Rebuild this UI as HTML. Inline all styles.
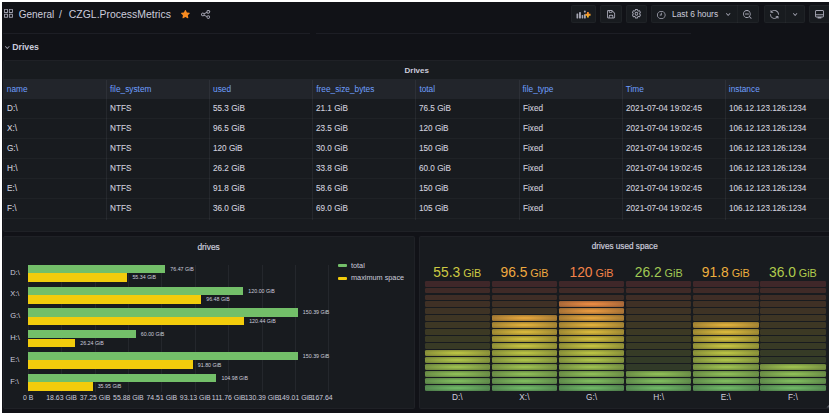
<!DOCTYPE html><html><head><meta charset="utf-8"><style>
*{box-sizing:border-box;margin:0;padding:0}
html,body{width:829px;height:413px;overflow:hidden;background:#fff}
body{font-family:"Liberation Sans",sans-serif;color:#ccccdc;position:relative}
.a{position:absolute}
.canvas{position:absolute;left:2px;top:2px;width:827px;height:411px;background:#111217;overflow:hidden}
.btn{position:absolute;top:5px;height:18px;background:#181b1f;border:1px solid rgba(204,204,220,0.07);border-radius:2px}
.panel{position:absolute;background:#181b1f;border:1px solid rgba(204,204,220,0.04);border-radius:2px;overflow:hidden}
.t{position:absolute;white-space:nowrap;line-height:1}
svg{position:absolute;overflow:visible}
</style></head><body><div class="canvas"></div>
<svg style="left:4.00px;top:9.20px" width="8.90" height="8.70" viewBox="2 2 20 20" preserveAspectRatio="none"><path d="M10,13H3a1,1,0,0,0-1,1v7a1,1,0,0,0,1,1h7a1,1,0,0,0,1-1V14A1,1,0,0,0,10,13ZM9,20H4V15H9ZM21,2H14a1,1,0,0,0-1,1v7a1,1,0,0,0,1,1h7a1,1,0,0,0,1-1V3A1,1,0,0,0,21,2ZM20,9H15V4h5Zm1,4H14a1,1,0,0,0-1,1v7a1,1,0,0,0,1,1h7a1,1,0,0,0,1-1V14A1,1,0,0,0,21,13Zm-1,7H15V15h5ZM10,2H3A1,1,0,0,0,2,3v7a1,1,0,0,0,1,1h7a1,1,0,0,0,1-1V3A1,1,0,0,0,10,2ZM9,9H4V4H9Z" fill="rgba(204,204,220,0.78)"/></svg>
<div class="t" style="left:18.7px;top:10.4px;font-size:10px;color:#ccccdc">General</div>
<div class="t" style="left:59px;top:10.4px;font-size:10.4px;color:#ccccdc">/</div>
<div class="t" style="left:68.8px;top:10.4px;font-size:10.45px;color:#ccccdc">CZGL.ProcessMetrics</div>
<svg style="left:181.10px;top:10.00px" width="8.80" height="8.30" viewBox="2 2.45 20 19.11" preserveAspectRatio="none"><path d="M22,9.67A1,1,0,0,0,21.14,9l-5.69-.83L12.9,3a1,1,0,0,0-1.8,0L8.55,8.16,2.86,9a1,1,0,0,0-.81.68,1,1,0,0,0,.25,1l4.130,4-1,5.68A1,1,0,0,0,6.9,21.44L12,18.77l5.1,2.67a.93.93,0,0,0,.46.12,1,1,0,0,0,.59-.19,1,1,0,0,0,.4-1l-1-5.68,4.13-4A1,1,0,0,0,22,9.67Z" fill="#f98b20"/></svg>
<svg style="left:201.00px;top:9.50px" width="9.10" height="8.90" viewBox="2 2 20 20" preserveAspectRatio="none"><path d="M18,14a4,4,0,0,0-3.08,1.48l-5.1-2.35a3.64,3.64,0,0,0,0-2.26l5.1-2.35A4,4,0,1,0,14,6a4.17,4.17,0,0,0,.07.71L8.79,9.14a4,4,0,1,0,0,5.72l5.280,2.43A4.17,4.17,0,0,0,14,18a4,4,0,1,0,4-4ZM18,4a2,2,0,1,1-2,2A2,2,0,0,1,18,4ZM6,14a2,2,0,1,1,2-2A2,2,0,0,1,6,14Zm12,6a2,2,0,1,1,2-2A2,2,0,0,1,18,20Z" fill="rgba(204,204,220,0.78)"/></svg>
<div class="btn" style="left:571px;width:24.5px;border-color:rgba(204,204,220,0.045)"></div>
<div class="btn" style="left:600px;width:21.5px;border-color:rgba(204,204,220,0.045)"></div>
<div class="btn" style="left:625.5px;width:21.5px;border-color:rgba(204,204,220,0.045)"></div>
<div class="btn" style="left:651px;width:108px;border-color:rgba(204,204,220,0.045)"></div>
<div class="a" style="left:737.3px;top:5px;width:1px;height:18px;background:rgba(204,204,220,0.045)"></div>
<div class="btn" style="left:764px;width:40.5px;border-color:rgba(204,204,220,0.045)"></div>
<div class="a" style="left:785.3px;top:5px;width:1px;height:18px;background:rgba(204,204,220,0.045)"></div>
<div class="btn" style="left:809px;width:30px;border-color:rgba(204,204,220,0.045)"></div>
<svg style="left:576px;top:10px" width="16" height="9" viewBox="0 0 16 9"><defs><linearGradient id="pg" x1="0" y1="0" x2="0" y2="1"><stop offset="0" stop-color="#f47c2c"/><stop offset="1" stop-color="#f7c02a"/></linearGradient></defs><g fill="rgba(204,204,220,0.78)"><rect x="0.5" y="3.6" width="1.7" height="4.8" rx="0.4"/><rect x="3" y="2" width="1.9" height="6.4" rx="0.4"/><rect x="5.7" y="5" width="1.5" height="3.4" rx="0.4"/><rect x="7.9" y="4.2" width="1.9" height="4.2" rx="0.4"/><rect x="7.9" y="0.6" width="1.9" height="2" rx="0.9"/></g><path d="M11.9 2.1v5.3M9.25 4.75h5.3" stroke="url(#pg)" stroke-width="1.8"/></svg>
<svg style="left:606.70px;top:10.20px" width="8.10" height="8.50" viewBox="3 3 18 18" preserveAspectRatio="none"><path d="M20.71,9.29l-6-6a1,1,0,0,0-.32-.21A1.09,1.09,0,0,0,14,3H6A3,3,0,0,0,3,6V18a3,3,0,0,0,3,3H18a3,3,0,0,0,3-3V10A1,1,0,0,0,20.710,9.29ZM9,5h4V7H9Zm6,14H9V16a1,1,0,0,1,1-1h4a1,1,0,0,1,1,1Zm4-1a1,1,0,0,1-1,1H17V16a3,3,0,0,0-3-3H10a3,3,0,0,0-3,3v3H6a1,1,0,0,1-1-1V6A1,1,0,0,1,6,5H7V8A1,1,0,0,0,8,9h6a1,1,0,0,0,1-1V6.41l4,4Z" fill="rgba(204,204,220,0.78)"/></svg>
<svg style="left:631.70px;top:9.20px" width="8.90" height="9.50" viewBox="1.9 2 19.5 20" preserveAspectRatio="none"><path d="M19.9,12.66a1,1,0,0,1,0-1.32L21.18,9.9a1,1,0,0,0,.12-1.17l-2-3.46a1,1,0,0,0-1.07-.48l-1.88.38a1,1,0,0,1-1.15-.66l-.61-1.83A1,1,0,0,0,13.64,2h-4a1,1,0,0,0-1,.68L8.08,4.51a1,1,0,0,1-1.15.66L5,4.79A1,1,0,0,0,4,5.27L2,8.73A1,1,0,0,0,2.1,9.9l1.27,1.44a1,1,0,0,1,0,1.32L2.1,14.1A1,1,0,0,0,2,15.27l2,3.46a1,1,0,0,0,1.07.48l1.88-.38a1,1,0,0,1,1.15.66l.61,1.83a1,1,0,0,0,1,.68h4a1,1,0,0,0,.95-.68l.61-1.83a1,1,0,0,1,1.15-.66l1.88.38a1,1,0,0,0,1.07-.48l2-3.46a1,1,0,0,0-.12-1.17ZM18.41,14l.8.9-1.28,2.22-1.18-.24a3,3,0,0,0-3.45,2L12.92,20H10.36L10,18.86a3,3,0,0,0-3.45-2l-1.18.24L4.07,14.89l.8-.9a3,3,0,0,0,0-4l-.8-.9L5.35,6.89l1.18.24a3,3,0,0,0,3.45-2L10.36,4h2.56l.38,1.14a3,3,0,0,0,3.45,2l1.18-.24,1.28,2.22-.8.9A3,3,0,0,0,18.41,14ZM11.64,8a4,4,0,1,0,4,4A4,4,0,0,0,11.64,8Zm0,6a2,2,0,1,1,2-2A2,2,0,0,1,11.64,14Z" fill="rgba(204,204,220,0.78)"/></svg>
<svg style="left:657.40px;top:10.60px" width="8.60" height="8.00" viewBox="2 2 20 20" preserveAspectRatio="none"><path d="M12,2A10,10,0,1,0,22,12,10.01114,10.01114,0,0,0,12,2Zm0,18a8,8,0,1,1,8-8A8.00917,8.00917,0,0,1,12,20Zm0-14a1,1,0,0,0-1,1v4H9a1,1,0,0,0,0,2h3a1,1,0,0,0,1-1V7A1,1,0,0,0,12,6Z" fill="rgba(204,204,220,0.78)"/></svg>
<div class="t" style="left:672px;top:10.3px;font-size:8.4px;color:#ccccdc">Last 6 hours</div>
<svg style="left:725.70px;top:13.10px" width="4.40" height="2.80" viewBox="6.76 8.88 10.53 6.239999999999998" preserveAspectRatio="none"><path d="M17,9.17a1,1,0,0,0-1.41,0L12,12.71,8.46,9.17a1,1,0,0,0-1.41,0,1,1,0,0,0,0,1.42l4.24,4.24a1,1,0,0,0,1.42,0L17,10.59A1,1,0,0,0,17,9.17Z" fill="rgba(204,204,220,0.78)"/></svg>
<svg style="left:743.30px;top:9.70px" width="8.60" height="8.80" viewBox="2 2 20 20" preserveAspectRatio="none"><path d="M21.71,20.29,18,16.61A9,9,0,1,0,16.61,18l3.68,3.68a1,1,0,0,0,1.42,0A1,1,0,0,0,21.71,20.29ZM11,18a7,7,0,1,1,7-7A7,7,0,0,1,11,18Zm4-8H7a1,1,0,0,0,0,2h8a1,1,0,0,0,0-2Z" fill="rgba(204,204,220,0.78)"/></svg>
<svg style="left:769.90px;top:9.70px" width="9.00" height="8.80" viewBox="2 2 20 20" preserveAspectRatio="none"><path d="M19.91,15.51H15.38a1,1,0,0,0,0,2h2.4A8,8,0,0,1,4,12a1,1,0,0,0-2,0,10,10,0,0,0,16.88,7.23V21a1,1,0,0,0,2,0V16.5A1,1,0,0,0,19.91,15.51ZM12,2A10,10,0,0,0,5.12,4.77V3a1,1,0,0,0-2,0V7.5a1,1,0,0,0,1,1h4.5a1,1,0,0,0,0-2H6.22A8,8,0,0,1,20,12a1,1,0,0,0,2,0A10,10,0,0,0,12,2Z" fill="rgba(204,204,220,0.78)"/></svg>
<svg style="left:792.80px;top:12.80px" width="4.30" height="3.00" viewBox="6.76 8.88 10.53 6.239999999999998" preserveAspectRatio="none"><path d="M17,9.17a1,1,0,0,0-1.41,0L12,12.71,8.46,9.17a1,1,0,0,0-1.41,0,1,1,0,0,0,0,1.42l4.24,4.24a1,1,0,0,0,1.42,0L17,10.59A1,1,0,0,0,17,9.17Z" fill="rgba(204,204,220,0.78)"/></svg>
<svg style="left:815.30px;top:10.00px" width="9.00" height="8.50" viewBox="2 3 20 16" preserveAspectRatio="none"><path d="M19,3H5A3,3,0,0,0,2,6v8a3,3,0,0,0,3,3H8.28l-.32.31A1,1,0,0,0,8.67,19h6.66a1,1,0,0,0,.71-1.71L15.72,17H19a3,3,0,0,0,3-3V6A3,3,0,0,0,19,3Zm1,11a1,1,0,0,1-1,1H5a1,1,0,0,1-1-1V13H20Zm0-3H4V6A1,1,0,0,1,5,5H19a1,1,0,0,1,1,1Z" fill="rgba(204,204,220,0.78)"/></svg>
<div class="a" style="left:3px;top:33px;width:306.6px;height:1px;background:rgba(204,204,220,0.07)"></div>
<div class="a" style="left:316px;top:33px;width:375px;height:1px;background:rgba(204,204,220,0.07)"></div>
<svg style="left:4.90px;top:45.50px" width="4.60" height="3.00" viewBox="6.76 8.88 10.53 6.239999999999998" preserveAspectRatio="none"><path d="M17,9.17a1,1,0,0,0-1.41,0L12,12.71,8.46,9.17a1,1,0,0,0-1.41,0,1,1,0,0,0,0,1.42l4.24,4.24a1,1,0,0,0,1.42,0L17,10.59A1,1,0,0,0,17,9.17Z" fill="rgba(204,204,220,0.75)"/></svg>
<div class="t" style="left:12.2px;top:43.1px;font-size:8.75px;font-weight:700;color:#ccccdc">Drives</div>
<div class="panel" style="left:3px;top:60px;width:830px;height:172px"></div>
<div class="t" style="left:404.5px;top:66.6px;font-size:8px;font-weight:700;color:#ccccdc">Drives</div>
<div class="a" style="left:3px;top:79.1px;width:826px;height:19.9px;background:#22252b"></div>
<div class="t" style="left:6.80px;top:85px;font-size:8.3px;color:#6e9fff">name</div>
<div class="a" style="left:105.95px;top:79.5px;width:1px;height:140px;background:rgba(204,204,220,0.07)"></div>
<div class="t" style="left:109.95px;top:85px;font-size:8.3px;color:#6e9fff">file_system</div>
<div class="a" style="left:209.10px;top:79.5px;width:1px;height:140px;background:rgba(204,204,220,0.07)"></div>
<div class="t" style="left:213.10px;top:85px;font-size:8.3px;color:#6e9fff">used</div>
<div class="a" style="left:312.25px;top:79.5px;width:1px;height:140px;background:rgba(204,204,220,0.07)"></div>
<div class="t" style="left:316.25px;top:85px;font-size:8.3px;color:#6e9fff">free_size_bytes</div>
<div class="a" style="left:415.40px;top:79.5px;width:1px;height:140px;background:rgba(204,204,220,0.07)"></div>
<div class="t" style="left:419.40px;top:85px;font-size:8.3px;color:#6e9fff">total</div>
<div class="a" style="left:518.55px;top:79.5px;width:1px;height:140px;background:rgba(204,204,220,0.07)"></div>
<div class="t" style="left:522.55px;top:85px;font-size:8.3px;color:#6e9fff">file_type</div>
<div class="a" style="left:621.70px;top:79.5px;width:1px;height:140px;background:rgba(204,204,220,0.07)"></div>
<div class="t" style="left:625.70px;top:85px;font-size:8.3px;color:#6e9fff">Time</div>
<div class="a" style="left:724.85px;top:79.5px;width:1px;height:140px;background:rgba(204,204,220,0.07)"></div>
<div class="t" style="left:728.85px;top:85px;font-size:8.3px;color:#6e9fff">instance</div>
<div class="a" style="left:3px;top:118.0px;width:826px;height:1px;background:rgba(204,204,220,0.045)"></div>
<div class="t" style="left:6.80px;top:104.3px;font-size:8.8px;transform:scaleX(0.93);transform-origin:0 0;color:#d0d0de;-webkit-text-stroke:0.1px #d0d0de">D:\</div>
<div class="t" style="left:109.95px;top:104.3px;font-size:8.8px;transform:scaleX(0.93);transform-origin:0 0;color:#d0d0de;-webkit-text-stroke:0.1px #d0d0de">NTFS</div>
<div class="t" style="left:213.10px;top:104.3px;font-size:8.8px;transform:scaleX(0.93);transform-origin:0 0;color:#d0d0de;-webkit-text-stroke:0.1px #d0d0de">55.3 GiB</div>
<div class="t" style="left:316.25px;top:104.3px;font-size:8.8px;transform:scaleX(0.93);transform-origin:0 0;color:#d0d0de;-webkit-text-stroke:0.1px #d0d0de">21.1 GiB</div>
<div class="t" style="left:419.40px;top:104.3px;font-size:8.8px;transform:scaleX(0.93);transform-origin:0 0;color:#d0d0de;-webkit-text-stroke:0.1px #d0d0de">76.5 GiB</div>
<div class="t" style="left:522.55px;top:104.3px;font-size:8.8px;transform:scaleX(0.93);transform-origin:0 0;color:#d0d0de;-webkit-text-stroke:0.1px #d0d0de">Fixed</div>
<div class="t" style="left:625.70px;top:104.3px;font-size:8.8px;transform:scaleX(0.93);transform-origin:0 0;color:#d0d0de;-webkit-text-stroke:0.1px #d0d0de">2021-07-04 19:02:45</div>
<div class="t" style="left:728.85px;top:104.3px;font-size:8.8px;transform:scaleX(0.93);transform-origin:0 0;color:#d0d0de;-webkit-text-stroke:0.1px #d0d0de">106.12.123.126:1234</div>
<div class="a" style="left:3px;top:138.0px;width:826px;height:1px;background:rgba(204,204,220,0.045)"></div>
<div class="t" style="left:6.80px;top:124.3px;font-size:8.8px;transform:scaleX(0.93);transform-origin:0 0;color:#d0d0de;-webkit-text-stroke:0.1px #d0d0de">X:\</div>
<div class="t" style="left:109.95px;top:124.3px;font-size:8.8px;transform:scaleX(0.93);transform-origin:0 0;color:#d0d0de;-webkit-text-stroke:0.1px #d0d0de">NTFS</div>
<div class="t" style="left:213.10px;top:124.3px;font-size:8.8px;transform:scaleX(0.93);transform-origin:0 0;color:#d0d0de;-webkit-text-stroke:0.1px #d0d0de">96.5 GiB</div>
<div class="t" style="left:316.25px;top:124.3px;font-size:8.8px;transform:scaleX(0.93);transform-origin:0 0;color:#d0d0de;-webkit-text-stroke:0.1px #d0d0de">23.5 GiB</div>
<div class="t" style="left:419.40px;top:124.3px;font-size:8.8px;transform:scaleX(0.93);transform-origin:0 0;color:#d0d0de;-webkit-text-stroke:0.1px #d0d0de">120 GiB</div>
<div class="t" style="left:522.55px;top:124.3px;font-size:8.8px;transform:scaleX(0.93);transform-origin:0 0;color:#d0d0de;-webkit-text-stroke:0.1px #d0d0de">Fixed</div>
<div class="t" style="left:625.70px;top:124.3px;font-size:8.8px;transform:scaleX(0.93);transform-origin:0 0;color:#d0d0de;-webkit-text-stroke:0.1px #d0d0de">2021-07-04 19:02:45</div>
<div class="t" style="left:728.85px;top:124.3px;font-size:8.8px;transform:scaleX(0.93);transform-origin:0 0;color:#d0d0de;-webkit-text-stroke:0.1px #d0d0de">106.12.123.126:1234</div>
<div class="a" style="left:3px;top:158.0px;width:826px;height:1px;background:rgba(204,204,220,0.045)"></div>
<div class="t" style="left:6.80px;top:144.3px;font-size:8.8px;transform:scaleX(0.93);transform-origin:0 0;color:#d0d0de;-webkit-text-stroke:0.1px #d0d0de">G:\</div>
<div class="t" style="left:109.95px;top:144.3px;font-size:8.8px;transform:scaleX(0.93);transform-origin:0 0;color:#d0d0de;-webkit-text-stroke:0.1px #d0d0de">NTFS</div>
<div class="t" style="left:213.10px;top:144.3px;font-size:8.8px;transform:scaleX(0.93);transform-origin:0 0;color:#d0d0de;-webkit-text-stroke:0.1px #d0d0de">120 GiB</div>
<div class="t" style="left:316.25px;top:144.3px;font-size:8.8px;transform:scaleX(0.93);transform-origin:0 0;color:#d0d0de;-webkit-text-stroke:0.1px #d0d0de">30.0 GiB</div>
<div class="t" style="left:419.40px;top:144.3px;font-size:8.8px;transform:scaleX(0.93);transform-origin:0 0;color:#d0d0de;-webkit-text-stroke:0.1px #d0d0de">150 GiB</div>
<div class="t" style="left:522.55px;top:144.3px;font-size:8.8px;transform:scaleX(0.93);transform-origin:0 0;color:#d0d0de;-webkit-text-stroke:0.1px #d0d0de">Fixed</div>
<div class="t" style="left:625.70px;top:144.3px;font-size:8.8px;transform:scaleX(0.93);transform-origin:0 0;color:#d0d0de;-webkit-text-stroke:0.1px #d0d0de">2021-07-04 19:02:45</div>
<div class="t" style="left:728.85px;top:144.3px;font-size:8.8px;transform:scaleX(0.93);transform-origin:0 0;color:#d0d0de;-webkit-text-stroke:0.1px #d0d0de">106.12.123.126:1234</div>
<div class="a" style="left:3px;top:178.0px;width:826px;height:1px;background:rgba(204,204,220,0.045)"></div>
<div class="t" style="left:6.80px;top:164.3px;font-size:8.8px;transform:scaleX(0.93);transform-origin:0 0;color:#d0d0de;-webkit-text-stroke:0.1px #d0d0de">H:\</div>
<div class="t" style="left:109.95px;top:164.3px;font-size:8.8px;transform:scaleX(0.93);transform-origin:0 0;color:#d0d0de;-webkit-text-stroke:0.1px #d0d0de">NTFS</div>
<div class="t" style="left:213.10px;top:164.3px;font-size:8.8px;transform:scaleX(0.93);transform-origin:0 0;color:#d0d0de;-webkit-text-stroke:0.1px #d0d0de">26.2 GiB</div>
<div class="t" style="left:316.25px;top:164.3px;font-size:8.8px;transform:scaleX(0.93);transform-origin:0 0;color:#d0d0de;-webkit-text-stroke:0.1px #d0d0de">33.8 GiB</div>
<div class="t" style="left:419.40px;top:164.3px;font-size:8.8px;transform:scaleX(0.93);transform-origin:0 0;color:#d0d0de;-webkit-text-stroke:0.1px #d0d0de">60.0 GiB</div>
<div class="t" style="left:522.55px;top:164.3px;font-size:8.8px;transform:scaleX(0.93);transform-origin:0 0;color:#d0d0de;-webkit-text-stroke:0.1px #d0d0de">Fixed</div>
<div class="t" style="left:625.70px;top:164.3px;font-size:8.8px;transform:scaleX(0.93);transform-origin:0 0;color:#d0d0de;-webkit-text-stroke:0.1px #d0d0de">2021-07-04 19:02:45</div>
<div class="t" style="left:728.85px;top:164.3px;font-size:8.8px;transform:scaleX(0.93);transform-origin:0 0;color:#d0d0de;-webkit-text-stroke:0.1px #d0d0de">106.12.123.126:1234</div>
<div class="a" style="left:3px;top:198.0px;width:826px;height:1px;background:rgba(204,204,220,0.045)"></div>
<div class="t" style="left:6.80px;top:184.3px;font-size:8.8px;transform:scaleX(0.93);transform-origin:0 0;color:#d0d0de;-webkit-text-stroke:0.1px #d0d0de">E:\</div>
<div class="t" style="left:109.95px;top:184.3px;font-size:8.8px;transform:scaleX(0.93);transform-origin:0 0;color:#d0d0de;-webkit-text-stroke:0.1px #d0d0de">NTFS</div>
<div class="t" style="left:213.10px;top:184.3px;font-size:8.8px;transform:scaleX(0.93);transform-origin:0 0;color:#d0d0de;-webkit-text-stroke:0.1px #d0d0de">91.8 GiB</div>
<div class="t" style="left:316.25px;top:184.3px;font-size:8.8px;transform:scaleX(0.93);transform-origin:0 0;color:#d0d0de;-webkit-text-stroke:0.1px #d0d0de">58.6 GiB</div>
<div class="t" style="left:419.40px;top:184.3px;font-size:8.8px;transform:scaleX(0.93);transform-origin:0 0;color:#d0d0de;-webkit-text-stroke:0.1px #d0d0de">150 GiB</div>
<div class="t" style="left:522.55px;top:184.3px;font-size:8.8px;transform:scaleX(0.93);transform-origin:0 0;color:#d0d0de;-webkit-text-stroke:0.1px #d0d0de">Fixed</div>
<div class="t" style="left:625.70px;top:184.3px;font-size:8.8px;transform:scaleX(0.93);transform-origin:0 0;color:#d0d0de;-webkit-text-stroke:0.1px #d0d0de">2021-07-04 19:02:45</div>
<div class="t" style="left:728.85px;top:184.3px;font-size:8.8px;transform:scaleX(0.93);transform-origin:0 0;color:#d0d0de;-webkit-text-stroke:0.1px #d0d0de">106.12.123.126:1234</div>
<div class="a" style="left:3px;top:218.0px;width:826px;height:1px;background:rgba(204,204,220,0.045)"></div>
<div class="t" style="left:6.80px;top:204.3px;font-size:8.8px;transform:scaleX(0.93);transform-origin:0 0;color:#d0d0de;-webkit-text-stroke:0.1px #d0d0de">F:\</div>
<div class="t" style="left:109.95px;top:204.3px;font-size:8.8px;transform:scaleX(0.93);transform-origin:0 0;color:#d0d0de;-webkit-text-stroke:0.1px #d0d0de">NTFS</div>
<div class="t" style="left:213.10px;top:204.3px;font-size:8.8px;transform:scaleX(0.93);transform-origin:0 0;color:#d0d0de;-webkit-text-stroke:0.1px #d0d0de">36.0 GiB</div>
<div class="t" style="left:316.25px;top:204.3px;font-size:8.8px;transform:scaleX(0.93);transform-origin:0 0;color:#d0d0de;-webkit-text-stroke:0.1px #d0d0de">69.0 GiB</div>
<div class="t" style="left:419.40px;top:204.3px;font-size:8.8px;transform:scaleX(0.93);transform-origin:0 0;color:#d0d0de;-webkit-text-stroke:0.1px #d0d0de">105 GiB</div>
<div class="t" style="left:522.55px;top:204.3px;font-size:8.8px;transform:scaleX(0.93);transform-origin:0 0;color:#d0d0de;-webkit-text-stroke:0.1px #d0d0de">Fixed</div>
<div class="t" style="left:625.70px;top:204.3px;font-size:8.8px;transform:scaleX(0.93);transform-origin:0 0;color:#d0d0de;-webkit-text-stroke:0.1px #d0d0de">2021-07-04 19:02:45</div>
<div class="t" style="left:728.85px;top:204.3px;font-size:8.8px;transform:scaleX(0.93);transform-origin:0 0;color:#d0d0de;-webkit-text-stroke:0.1px #d0d0de">106.12.123.126:1234</div>
<div class="panel" style="left:3px;top:236px;width:412px;height:173px"></div>
<div class="t" style="left:197.4px;top:243.1px;font-size:8.4px;color:#ccccdc;-webkit-text-stroke:0.2px #ccccdc">drives</div>
<div class="a" style="left:27.70px;top:264.5px;width:1px;height:127px;background:rgba(204,204,220,0.07)"></div>
<div class="a" style="left:61.10px;top:264.5px;width:1px;height:127px;background:rgba(204,204,220,0.07)"></div>
<div class="a" style="left:94.50px;top:264.5px;width:1px;height:127px;background:rgba(204,204,220,0.07)"></div>
<div class="a" style="left:127.90px;top:264.5px;width:1px;height:127px;background:rgba(204,204,220,0.07)"></div>
<div class="a" style="left:161.30px;top:264.5px;width:1px;height:127px;background:rgba(204,204,220,0.07)"></div>
<div class="a" style="left:194.70px;top:264.5px;width:1px;height:127px;background:rgba(204,204,220,0.07)"></div>
<div class="a" style="left:228.10px;top:264.5px;width:1px;height:127px;background:rgba(204,204,220,0.07)"></div>
<div class="a" style="left:261.50px;top:264.5px;width:1px;height:127px;background:rgba(204,204,220,0.07)"></div>
<div class="a" style="left:294.90px;top:264.5px;width:1px;height:127px;background:rgba(204,204,220,0.07)"></div>
<div class="a" style="left:328.30px;top:264.5px;width:1px;height:127px;background:rgba(204,204,220,0.07)"></div>
<div class="a" style="left:337.5px;top:264.3px;width:9px;height:3px;border-radius:1px;background:#73bf69"></div>
<div class="a" style="left:337.5px;top:276.6px;width:9px;height:3px;border-radius:1px;background:#f2cc0c"></div>
<div class="a" style="left:337px;top:258px;width:0.8px;height:133px;background:rgba(204,204,220,0.0)"></div>
<div class="t" style="left:351px;top:261.8px;font-size:7.3px;color:#ccccdc">total</div>
<div class="t" style="left:351px;top:274.2px;font-size:7.3px;color:#ccccdc">maximum space</div>
<div class="a" style="left:28.2px;top:264.70px;width:137.12px;height:8.4px;background:#73bf69"></div>
<div class="a" style="left:28.2px;top:273.10px;width:99.23px;height:8.7px;background:#f2cc0c"></div>
<div class="t" style="left:170.32px;top:266.80px;font-size:5.3px;color:#ccccdc">76.47 GiB</div>
<div class="t" style="left:132.43px;top:275.40px;font-size:5.3px;color:#ccccdc">55.34 GiB</div>
<div class="t" style="left:10.2px;top:268.60px;font-size:7.5px;color:#ccccdc">D:\</div>
<div class="a" style="left:28.2px;top:286.50px;width:215.17px;height:8.4px;background:#73bf69"></div>
<div class="a" style="left:28.2px;top:294.90px;width:173.00px;height:8.7px;background:#f2cc0c"></div>
<div class="t" style="left:248.37px;top:288.60px;font-size:5.3px;color:#ccccdc">120.00 GiB</div>
<div class="t" style="left:206.20px;top:297.20px;font-size:5.3px;color:#ccccdc">96.48 GiB</div>
<div class="t" style="left:10.2px;top:290.40px;font-size:7.5px;color:#ccccdc">X:\</div>
<div class="a" style="left:28.2px;top:308.30px;width:269.66px;height:8.4px;background:#73bf69"></div>
<div class="a" style="left:28.2px;top:316.70px;width:215.96px;height:8.7px;background:#f2cc0c"></div>
<div class="t" style="left:302.86px;top:310.40px;font-size:5.3px;color:#ccccdc">150.39 GiB</div>
<div class="t" style="left:249.16px;top:319.00px;font-size:5.3px;color:#ccccdc">120.44 GiB</div>
<div class="t" style="left:10.2px;top:312.20px;font-size:7.5px;color:#ccccdc">G:\</div>
<div class="a" style="left:28.2px;top:330.10px;width:107.59px;height:8.4px;background:#73bf69"></div>
<div class="a" style="left:28.2px;top:338.50px;width:47.05px;height:8.7px;background:#f2cc0c"></div>
<div class="t" style="left:140.79px;top:332.20px;font-size:5.3px;color:#ccccdc">60.00 GiB</div>
<div class="t" style="left:80.25px;top:340.80px;font-size:5.3px;color:#ccccdc">26.24 GiB</div>
<div class="t" style="left:10.2px;top:334.00px;font-size:7.5px;color:#ccccdc">H:\</div>
<div class="a" style="left:28.2px;top:351.90px;width:269.66px;height:8.4px;background:#73bf69"></div>
<div class="a" style="left:28.2px;top:360.30px;width:164.61px;height:8.7px;background:#f2cc0c"></div>
<div class="t" style="left:302.86px;top:354.00px;font-size:5.3px;color:#ccccdc">150.39 GiB</div>
<div class="t" style="left:197.81px;top:362.60px;font-size:5.3px;color:#ccccdc">91.80 GiB</div>
<div class="t" style="left:10.2px;top:355.80px;font-size:7.5px;color:#ccccdc">E:\</div>
<div class="a" style="left:28.2px;top:373.70px;width:188.24px;height:8.4px;background:#73bf69"></div>
<div class="a" style="left:28.2px;top:382.10px;width:64.46px;height:8.7px;background:#f2cc0c"></div>
<div class="t" style="left:221.44px;top:375.80px;font-size:5.3px;color:#ccccdc">104.98 GiB</div>
<div class="t" style="left:97.66px;top:384.40px;font-size:5.3px;color:#ccccdc">35.95 GiB</div>
<div class="t" style="left:10.2px;top:377.60px;font-size:7.5px;color:#ccccdc">F:\</div>
<div class="a" style="left:3px;top:385px;width:331px;height:20px;overflow:hidden">
<div class="t" style="left:25.20px;top:10.3px;font-size:6.9px;color:#ccccdc;transform:translateX(-50%)">0 B</div>
<div class="t" style="left:58.60px;top:10.3px;font-size:6.9px;color:#ccccdc;transform:translateX(-50%)">18.63 GiB</div>
<div class="t" style="left:92.00px;top:10.3px;font-size:6.9px;color:#ccccdc;transform:translateX(-50%)">37.25 GiB</div>
<div class="t" style="left:125.40px;top:10.3px;font-size:6.9px;color:#ccccdc;transform:translateX(-50%)">55.88 GiB</div>
<div class="t" style="left:158.80px;top:10.3px;font-size:6.9px;color:#ccccdc;transform:translateX(-50%)">74.51 GiB</div>
<div class="t" style="left:192.20px;top:10.3px;font-size:6.9px;color:#ccccdc;transform:translateX(-50%)">93.13 GiB</div>
<div class="t" style="left:225.60px;top:10.3px;font-size:6.9px;color:#ccccdc;transform:translateX(-50%)">111.76 GiB</div>
<div class="t" style="left:259.00px;top:10.3px;font-size:6.9px;color:#ccccdc;transform:translateX(-50%)">130.39 GiB</div>
<div class="t" style="left:292.40px;top:10.3px;font-size:6.9px;color:#ccccdc;transform:translateX(-50%)">149.01 GiB</div>
<div class="t" style="left:325.80px;top:10.3px;font-size:6.9px;color:#ccccdc;transform:translateX(-50%)">167.64 GiB</div>
</div>
<div class="panel" style="left:419px;top:236px;width:414px;height:173px"></div>
<div class="t" style="left:591.7px;top:243.1px;font-size:8.2px;color:#ccccdc;-webkit-text-stroke:0.2px #ccccdc">drives used space</div>
<div class="a" style="left:0;top:0;width:829px;height:413px">
<div class="t" style="left:457.30px;top:264.2px;transform:translateX(-50%);color:rgb(205, 202, 66)"><span style="font-size:13.8px">55.3</span><span style="font-size:10.8px"> GiB</span></div>
<div class="a" style="left:424.55px;top:385.06px;width:65.5px;height:5.91px;border-radius:1.2px;background-image:radial-gradient(rgba(115,191,105,0.95) 10%, rgba(115,191,105,0.55))"></div>
<div class="a" style="left:424.55px;top:378.10px;width:65.5px;height:5.91px;border-radius:1.2px;background-image:radial-gradient(rgba(132,195,97,0.95) 10%, rgba(132,195,97,0.55))"></div>
<div class="a" style="left:424.55px;top:371.13px;width:65.5px;height:5.91px;border-radius:1.2px;background-image:radial-gradient(rgba(148,198,90,0.95) 10%, rgba(148,198,90,0.55))"></div>
<div class="a" style="left:424.55px;top:364.17px;width:65.5px;height:5.91px;border-radius:1.2px;background-image:radial-gradient(rgba(164,201,82,0.95) 10%, rgba(164,201,82,0.55))"></div>
<div class="a" style="left:424.55px;top:357.20px;width:65.5px;height:5.91px;border-radius:1.2px;background-image:radial-gradient(rgba(180,203,76,0.95) 10%, rgba(180,203,76,0.55))"></div>
<div class="a" style="left:424.55px;top:350.24px;width:65.5px;height:5.91px;border-radius:1.2px;background-image:radial-gradient(rgba(194,203,70,0.95) 10%, rgba(194,203,70,0.55))"></div>
<div class="a" style="left:424.55px;top:343.28px;width:65.5px;height:5.91px;border-radius:1.2px;background-color:rgba(206,202,66,0.18)"></div>
<div class="a" style="left:424.55px;top:336.31px;width:65.5px;height:5.91px;border-radius:1.2px;background-color:rgba(217,198,62,0.18)"></div>
<div class="a" style="left:424.55px;top:329.35px;width:65.5px;height:5.91px;border-radius:1.2px;background-color:rgba(226,192,61,0.18)"></div>
<div class="a" style="left:424.55px;top:322.38px;width:65.5px;height:5.91px;border-radius:1.2px;background-color:rgba(233,183,61,0.18)"></div>
<div class="a" style="left:424.55px;top:315.42px;width:65.5px;height:5.91px;border-radius:1.2px;background-color:rgba(238,172,62,0.18)"></div>
<div class="a" style="left:424.55px;top:308.46px;width:65.5px;height:5.91px;border-radius:1.2px;background-color:rgba(241,159,65,0.18)"></div>
<div class="a" style="left:424.55px;top:301.49px;width:65.5px;height:5.91px;border-radius:1.2px;background-color:rgba(243,144,69,0.18)"></div>
<div class="a" style="left:424.55px;top:294.53px;width:65.5px;height:5.91px;border-radius:1.2px;background-color:rgba(244,127,74,0.18)"></div>
<div class="a" style="left:424.55px;top:287.56px;width:65.5px;height:5.91px;border-radius:1.2px;background-color:rgba(244,110,80,0.18)"></div>
<div class="a" style="left:424.55px;top:280.60px;width:65.5px;height:5.91px;border-radius:1.2px;background-color:rgba(243,92,86,0.18)"></div>
<div class="t" style="left:524.42px;top:264.2px;transform:translateX(-50%);color:rgb(239, 169, 63)"><span style="font-size:13.8px">96.5</span><span style="font-size:10.8px"> GiB</span></div>
<div class="a" style="left:491.67px;top:385.06px;width:65.5px;height:5.91px;border-radius:1.2px;background-image:radial-gradient(rgba(115,191,105,0.95) 10%, rgba(115,191,105,0.55))"></div>
<div class="a" style="left:491.67px;top:378.10px;width:65.5px;height:5.91px;border-radius:1.2px;background-image:radial-gradient(rgba(132,195,97,0.95) 10%, rgba(132,195,97,0.55))"></div>
<div class="a" style="left:491.67px;top:371.13px;width:65.5px;height:5.91px;border-radius:1.2px;background-image:radial-gradient(rgba(148,198,90,0.95) 10%, rgba(148,198,90,0.55))"></div>
<div class="a" style="left:491.67px;top:364.17px;width:65.5px;height:5.91px;border-radius:1.2px;background-image:radial-gradient(rgba(164,201,82,0.95) 10%, rgba(164,201,82,0.55))"></div>
<div class="a" style="left:491.67px;top:357.20px;width:65.5px;height:5.91px;border-radius:1.2px;background-image:radial-gradient(rgba(180,203,76,0.95) 10%, rgba(180,203,76,0.55))"></div>
<div class="a" style="left:491.67px;top:350.24px;width:65.5px;height:5.91px;border-radius:1.2px;background-image:radial-gradient(rgba(194,203,70,0.95) 10%, rgba(194,203,70,0.55))"></div>
<div class="a" style="left:491.67px;top:343.28px;width:65.5px;height:5.91px;border-radius:1.2px;background-image:radial-gradient(rgba(206,202,66,0.95) 10%, rgba(206,202,66,0.55))"></div>
<div class="a" style="left:491.67px;top:336.31px;width:65.5px;height:5.91px;border-radius:1.2px;background-image:radial-gradient(rgba(217,198,62,0.95) 10%, rgba(217,198,62,0.55))"></div>
<div class="a" style="left:491.67px;top:329.35px;width:65.5px;height:5.91px;border-radius:1.2px;background-image:radial-gradient(rgba(226,192,61,0.95) 10%, rgba(226,192,61,0.55))"></div>
<div class="a" style="left:491.67px;top:322.38px;width:65.5px;height:5.91px;border-radius:1.2px;background-image:radial-gradient(rgba(233,183,61,0.95) 10%, rgba(233,183,61,0.55))"></div>
<div class="a" style="left:491.67px;top:315.42px;width:65.5px;height:5.91px;border-radius:1.2px;background-image:radial-gradient(rgba(238,172,62,0.95) 10%, rgba(238,172,62,0.55))"></div>
<div class="a" style="left:491.67px;top:308.46px;width:65.5px;height:5.91px;border-radius:1.2px;background-color:rgba(241,159,65,0.18)"></div>
<div class="a" style="left:491.67px;top:301.49px;width:65.5px;height:5.91px;border-radius:1.2px;background-color:rgba(243,144,69,0.18)"></div>
<div class="a" style="left:491.67px;top:294.53px;width:65.5px;height:5.91px;border-radius:1.2px;background-color:rgba(244,127,74,0.18)"></div>
<div class="a" style="left:491.67px;top:287.56px;width:65.5px;height:5.91px;border-radius:1.2px;background-color:rgba(244,110,80,0.18)"></div>
<div class="a" style="left:491.67px;top:280.60px;width:65.5px;height:5.91px;border-radius:1.2px;background-color:rgba(243,92,86,0.18)"></div>
<div class="t" style="left:591.54px;top:264.2px;transform:translateX(-50%);color:rgb(244, 131, 73)"><span style="font-size:13.8px">120</span><span style="font-size:10.8px"> GiB</span></div>
<div class="a" style="left:558.79px;top:385.06px;width:65.5px;height:5.91px;border-radius:1.2px;background-image:radial-gradient(rgba(115,191,105,0.95) 10%, rgba(115,191,105,0.55))"></div>
<div class="a" style="left:558.79px;top:378.10px;width:65.5px;height:5.91px;border-radius:1.2px;background-image:radial-gradient(rgba(132,195,97,0.95) 10%, rgba(132,195,97,0.55))"></div>
<div class="a" style="left:558.79px;top:371.13px;width:65.5px;height:5.91px;border-radius:1.2px;background-image:radial-gradient(rgba(148,198,90,0.95) 10%, rgba(148,198,90,0.55))"></div>
<div class="a" style="left:558.79px;top:364.17px;width:65.5px;height:5.91px;border-radius:1.2px;background-image:radial-gradient(rgba(164,201,82,0.95) 10%, rgba(164,201,82,0.55))"></div>
<div class="a" style="left:558.79px;top:357.20px;width:65.5px;height:5.91px;border-radius:1.2px;background-image:radial-gradient(rgba(180,203,76,0.95) 10%, rgba(180,203,76,0.55))"></div>
<div class="a" style="left:558.79px;top:350.24px;width:65.5px;height:5.91px;border-radius:1.2px;background-image:radial-gradient(rgba(194,203,70,0.95) 10%, rgba(194,203,70,0.55))"></div>
<div class="a" style="left:558.79px;top:343.28px;width:65.5px;height:5.91px;border-radius:1.2px;background-image:radial-gradient(rgba(206,202,66,0.95) 10%, rgba(206,202,66,0.55))"></div>
<div class="a" style="left:558.79px;top:336.31px;width:65.5px;height:5.91px;border-radius:1.2px;background-image:radial-gradient(rgba(217,198,62,0.95) 10%, rgba(217,198,62,0.55))"></div>
<div class="a" style="left:558.79px;top:329.35px;width:65.5px;height:5.91px;border-radius:1.2px;background-image:radial-gradient(rgba(226,192,61,0.95) 10%, rgba(226,192,61,0.55))"></div>
<div class="a" style="left:558.79px;top:322.38px;width:65.5px;height:5.91px;border-radius:1.2px;background-image:radial-gradient(rgba(233,183,61,0.95) 10%, rgba(233,183,61,0.55))"></div>
<div class="a" style="left:558.79px;top:315.42px;width:65.5px;height:5.91px;border-radius:1.2px;background-image:radial-gradient(rgba(238,172,62,0.95) 10%, rgba(238,172,62,0.55))"></div>
<div class="a" style="left:558.79px;top:308.46px;width:65.5px;height:5.91px;border-radius:1.2px;background-image:radial-gradient(rgba(241,159,65,0.95) 10%, rgba(241,159,65,0.55))"></div>
<div class="a" style="left:558.79px;top:301.49px;width:65.5px;height:5.91px;border-radius:1.2px;background-image:radial-gradient(rgba(243,144,69,0.95) 10%, rgba(243,144,69,0.55))"></div>
<div class="a" style="left:558.79px;top:294.53px;width:65.5px;height:5.91px;border-radius:1.2px;background-color:rgba(244,127,74,0.18)"></div>
<div class="a" style="left:558.79px;top:287.56px;width:65.5px;height:5.91px;border-radius:1.2px;background-color:rgba(244,110,80,0.18)"></div>
<div class="a" style="left:558.79px;top:280.60px;width:65.5px;height:5.91px;border-radius:1.2px;background-color:rgba(243,92,86,0.18)"></div>
<div class="t" style="left:658.66px;top:264.2px;transform:translateX(-50%);color:rgb(161, 201, 84)"><span style="font-size:13.8px">26.2</span><span style="font-size:10.8px"> GiB</span></div>
<div class="a" style="left:625.91px;top:385.06px;width:65.5px;height:5.91px;border-radius:1.2px;background-image:radial-gradient(rgba(115,191,105,0.95) 10%, rgba(115,191,105,0.55))"></div>
<div class="a" style="left:625.91px;top:378.10px;width:65.5px;height:5.91px;border-radius:1.2px;background-image:radial-gradient(rgba(132,195,97,0.95) 10%, rgba(132,195,97,0.55))"></div>
<div class="a" style="left:625.91px;top:371.13px;width:65.5px;height:5.91px;border-radius:1.2px;background-image:radial-gradient(rgba(148,198,90,0.95) 10%, rgba(148,198,90,0.55))"></div>
<div class="a" style="left:625.91px;top:364.17px;width:65.5px;height:5.91px;border-radius:1.2px;background-color:rgba(164,201,82,0.18)"></div>
<div class="a" style="left:625.91px;top:357.20px;width:65.5px;height:5.91px;border-radius:1.2px;background-color:rgba(180,203,76,0.18)"></div>
<div class="a" style="left:625.91px;top:350.24px;width:65.5px;height:5.91px;border-radius:1.2px;background-color:rgba(194,203,70,0.18)"></div>
<div class="a" style="left:625.91px;top:343.28px;width:65.5px;height:5.91px;border-radius:1.2px;background-color:rgba(206,202,66,0.18)"></div>
<div class="a" style="left:625.91px;top:336.31px;width:65.5px;height:5.91px;border-radius:1.2px;background-color:rgba(217,198,62,0.18)"></div>
<div class="a" style="left:625.91px;top:329.35px;width:65.5px;height:5.91px;border-radius:1.2px;background-color:rgba(226,192,61,0.18)"></div>
<div class="a" style="left:625.91px;top:322.38px;width:65.5px;height:5.91px;border-radius:1.2px;background-color:rgba(233,183,61,0.18)"></div>
<div class="a" style="left:625.91px;top:315.42px;width:65.5px;height:5.91px;border-radius:1.2px;background-color:rgba(238,172,62,0.18)"></div>
<div class="a" style="left:625.91px;top:308.46px;width:65.5px;height:5.91px;border-radius:1.2px;background-color:rgba(241,159,65,0.18)"></div>
<div class="a" style="left:625.91px;top:301.49px;width:65.5px;height:5.91px;border-radius:1.2px;background-color:rgba(243,144,69,0.18)"></div>
<div class="a" style="left:625.91px;top:294.53px;width:65.5px;height:5.91px;border-radius:1.2px;background-color:rgba(244,127,74,0.18)"></div>
<div class="a" style="left:625.91px;top:287.56px;width:65.5px;height:5.91px;border-radius:1.2px;background-color:rgba(244,110,80,0.18)"></div>
<div class="a" style="left:625.91px;top:280.60px;width:65.5px;height:5.91px;border-radius:1.2px;background-color:rgba(243,92,86,0.18)"></div>
<div class="t" style="left:725.78px;top:264.2px;transform:translateX(-50%);color:rgb(237, 175, 62)"><span style="font-size:13.8px">91.8</span><span style="font-size:10.8px"> GiB</span></div>
<div class="a" style="left:693.03px;top:385.06px;width:65.5px;height:5.91px;border-radius:1.2px;background-image:radial-gradient(rgba(115,191,105,0.95) 10%, rgba(115,191,105,0.55))"></div>
<div class="a" style="left:693.03px;top:378.10px;width:65.5px;height:5.91px;border-radius:1.2px;background-image:radial-gradient(rgba(132,195,97,0.95) 10%, rgba(132,195,97,0.55))"></div>
<div class="a" style="left:693.03px;top:371.13px;width:65.5px;height:5.91px;border-radius:1.2px;background-image:radial-gradient(rgba(148,198,90,0.95) 10%, rgba(148,198,90,0.55))"></div>
<div class="a" style="left:693.03px;top:364.17px;width:65.5px;height:5.91px;border-radius:1.2px;background-image:radial-gradient(rgba(164,201,82,0.95) 10%, rgba(164,201,82,0.55))"></div>
<div class="a" style="left:693.03px;top:357.20px;width:65.5px;height:5.91px;border-radius:1.2px;background-image:radial-gradient(rgba(180,203,76,0.95) 10%, rgba(180,203,76,0.55))"></div>
<div class="a" style="left:693.03px;top:350.24px;width:65.5px;height:5.91px;border-radius:1.2px;background-image:radial-gradient(rgba(194,203,70,0.95) 10%, rgba(194,203,70,0.55))"></div>
<div class="a" style="left:693.03px;top:343.28px;width:65.5px;height:5.91px;border-radius:1.2px;background-image:radial-gradient(rgba(206,202,66,0.95) 10%, rgba(206,202,66,0.55))"></div>
<div class="a" style="left:693.03px;top:336.31px;width:65.5px;height:5.91px;border-radius:1.2px;background-image:radial-gradient(rgba(217,198,62,0.95) 10%, rgba(217,198,62,0.55))"></div>
<div class="a" style="left:693.03px;top:329.35px;width:65.5px;height:5.91px;border-radius:1.2px;background-image:radial-gradient(rgba(226,192,61,0.95) 10%, rgba(226,192,61,0.55))"></div>
<div class="a" style="left:693.03px;top:322.38px;width:65.5px;height:5.91px;border-radius:1.2px;background-image:radial-gradient(rgba(233,183,61,0.95) 10%, rgba(233,183,61,0.55))"></div>
<div class="a" style="left:693.03px;top:315.42px;width:65.5px;height:5.91px;border-radius:1.2px;background-color:rgba(238,172,62,0.18)"></div>
<div class="a" style="left:693.03px;top:308.46px;width:65.5px;height:5.91px;border-radius:1.2px;background-color:rgba(241,159,65,0.18)"></div>
<div class="a" style="left:693.03px;top:301.49px;width:65.5px;height:5.91px;border-radius:1.2px;background-color:rgba(243,144,69,0.18)"></div>
<div class="a" style="left:693.03px;top:294.53px;width:65.5px;height:5.91px;border-radius:1.2px;background-color:rgba(244,127,74,0.18)"></div>
<div class="a" style="left:693.03px;top:287.56px;width:65.5px;height:5.91px;border-radius:1.2px;background-color:rgba(244,110,80,0.18)"></div>
<div class="a" style="left:693.03px;top:280.60px;width:65.5px;height:5.91px;border-radius:1.2px;background-color:rgba(243,92,86,0.18)"></div>
<div class="t" style="left:792.90px;top:264.2px;transform:translateX(-50%);color:rgb(177, 203, 77)"><span style="font-size:13.8px">36.0</span><span style="font-size:10.8px"> GiB</span></div>
<div class="a" style="left:760.15px;top:385.06px;width:65.5px;height:5.91px;border-radius:1.2px;background-image:radial-gradient(rgba(115,191,105,0.95) 10%, rgba(115,191,105,0.55))"></div>
<div class="a" style="left:760.15px;top:378.10px;width:65.5px;height:5.91px;border-radius:1.2px;background-image:radial-gradient(rgba(132,195,97,0.95) 10%, rgba(132,195,97,0.55))"></div>
<div class="a" style="left:760.15px;top:371.13px;width:65.5px;height:5.91px;border-radius:1.2px;background-image:radial-gradient(rgba(148,198,90,0.95) 10%, rgba(148,198,90,0.55))"></div>
<div class="a" style="left:760.15px;top:364.17px;width:65.5px;height:5.91px;border-radius:1.2px;background-image:radial-gradient(rgba(164,201,82,0.95) 10%, rgba(164,201,82,0.55))"></div>
<div class="a" style="left:760.15px;top:357.20px;width:65.5px;height:5.91px;border-radius:1.2px;background-color:rgba(180,203,76,0.18)"></div>
<div class="a" style="left:760.15px;top:350.24px;width:65.5px;height:5.91px;border-radius:1.2px;background-color:rgba(194,203,70,0.18)"></div>
<div class="a" style="left:760.15px;top:343.28px;width:65.5px;height:5.91px;border-radius:1.2px;background-color:rgba(206,202,66,0.18)"></div>
<div class="a" style="left:760.15px;top:336.31px;width:65.5px;height:5.91px;border-radius:1.2px;background-color:rgba(217,198,62,0.18)"></div>
<div class="a" style="left:760.15px;top:329.35px;width:65.5px;height:5.91px;border-radius:1.2px;background-color:rgba(226,192,61,0.18)"></div>
<div class="a" style="left:760.15px;top:322.38px;width:65.5px;height:5.91px;border-radius:1.2px;background-color:rgba(233,183,61,0.18)"></div>
<div class="a" style="left:760.15px;top:315.42px;width:65.5px;height:5.91px;border-radius:1.2px;background-color:rgba(238,172,62,0.18)"></div>
<div class="a" style="left:760.15px;top:308.46px;width:65.5px;height:5.91px;border-radius:1.2px;background-color:rgba(241,159,65,0.18)"></div>
<div class="a" style="left:760.15px;top:301.49px;width:65.5px;height:5.91px;border-radius:1.2px;background-color:rgba(243,144,69,0.18)"></div>
<div class="a" style="left:760.15px;top:294.53px;width:65.5px;height:5.91px;border-radius:1.2px;background-color:rgba(244,127,74,0.18)"></div>
<div class="a" style="left:760.15px;top:287.56px;width:65.5px;height:5.91px;border-radius:1.2px;background-color:rgba(244,110,80,0.18)"></div>
<div class="a" style="left:760.15px;top:280.60px;width:65.5px;height:5.91px;border-radius:1.2px;background-color:rgba(243,92,86,0.18)"></div>
</div>
<div class="t" style="left:457.30px;top:393px;transform:translateX(-50%);font-size:8.3px;color:#d0d0de">D:\</div>
<div class="t" style="left:524.42px;top:393px;transform:translateX(-50%);font-size:8.3px;color:#d0d0de">X:\</div>
<div class="t" style="left:591.54px;top:393px;transform:translateX(-50%);font-size:8.3px;color:#d0d0de">G:\</div>
<div class="t" style="left:658.66px;top:393px;transform:translateX(-50%);font-size:8.3px;color:#d0d0de">H:\</div>
<div class="t" style="left:725.78px;top:393px;transform:translateX(-50%);font-size:8.3px;color:#d0d0de">E:\</div>
<div class="t" style="left:792.90px;top:393px;transform:translateX(-50%);font-size:8.3px;color:#d0d0de">F:\</div>
<svg style="left:825.5px;top:402.5px" width="4" height="5" viewBox="0 0 4 5"><path d="M4 0.5L0.5 4.5H4z" fill="rgba(204,204,220,0.35)"/></svg></body></html>
